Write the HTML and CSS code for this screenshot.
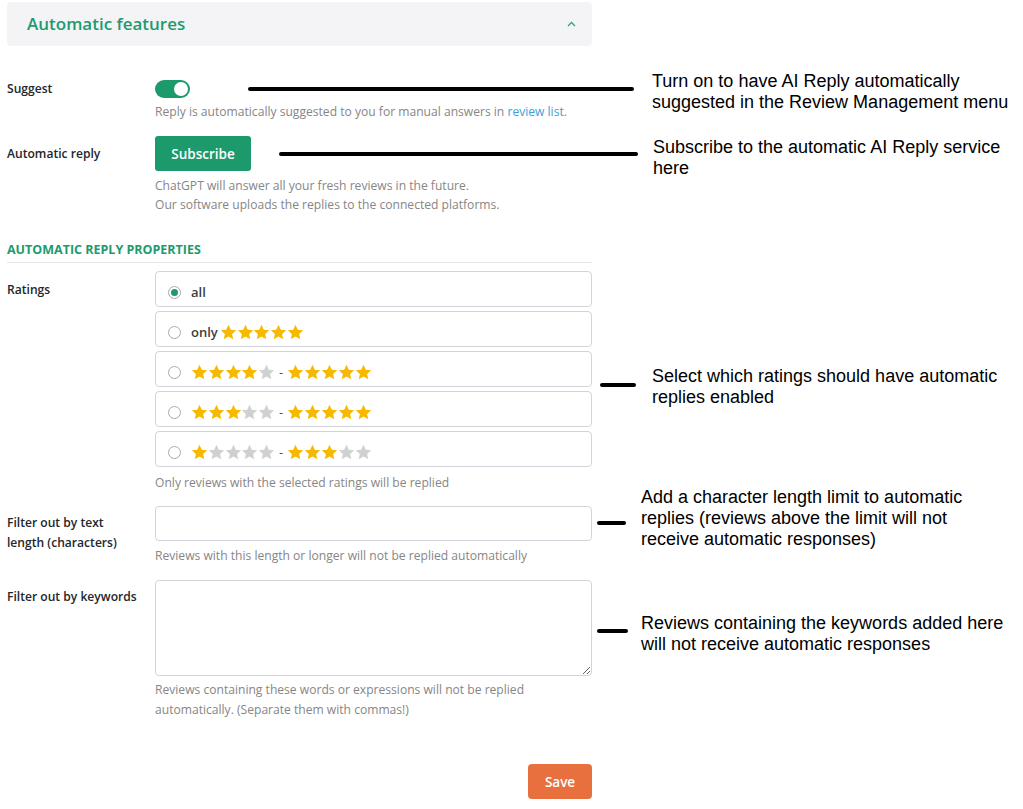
FILE: index.html
```html
<!DOCTYPE html>
<html lang="en">
<head>
<meta charset="utf-8">
<title>Automatic features</title>
<link rel="stylesheet" href="styles.css">
</head>
<body>
<svg class="defs" width="0" height="0" aria-hidden="true">
  <symbol id="star" viewBox="0 0 24 24">
    <polygon points="12,1.2 15.2,8.1 22.8,8.9 17.1,14.1 18.7,21.6 12,17.8 5.3,21.6 6.9,14.1 1.2,8.9 8.8,8.1"/>
  </symbol>
</svg>
<div class="page">
  <div class="form">
    <div class="panel-head">
      <h2 class="panel-title">Automatic features</h2>
      <svg class="chevron" width="9" height="6" viewBox="0 0 9 6"><polyline points="1,5 4.5,1.5 8,5" fill="none" stroke="#2aa58a" stroke-width="1.3"/></svg>
    </div>

    <div class="row row-suggest">
      <div class="label">Suggest</div>
      <div class="control">
        <div class="toggle"><span class="knob"></span></div>
        <p class="hint">Reply is automatically suggested to you for manual answers in <a class="link" href="#">review list</a>.</p>
      </div>
    </div>

    <div class="row row-auto">
      <div class="label label-btn">Automatic reply</div>
      <div class="control">
        <button class="btn btn-green" type="button">Subscribe</button>
        <p class="hint hint-btn">ChatGPT will answer all your fresh reviews in the future.<br>Our software uploads the replies to the connected platforms.</p>
      </div>
    </div>

    <h3 class="section-title">AUTOMATIC REPLY PROPERTIES</h3>

    <div class="row row-ratings">
      <div class="label label-box">Ratings</div>
      <div class="control">
        <div class="options">
          <label class="option"><span class="radio checked"></span><span class="opt-text">all</span></label>
          <label class="option"><span class="radio"></span><span class="opt-text">only</span>
            <span class="stars"><svg class="s on"><use href="#star"/></svg><svg class="s on"><use href="#star"/></svg><svg class="s on"><use href="#star"/></svg><svg class="s on"><use href="#star"/></svg><svg class="s on"><use href="#star"/></svg></span></label>
          <label class="option"><span class="radio"></span>
            <span class="stars"><svg class="s on"><use href="#star"/></svg><svg class="s on"><use href="#star"/></svg><svg class="s on"><use href="#star"/></svg><svg class="s on"><use href="#star"/></svg><svg class="s off"><use href="#star"/></svg></span><span class="dash">-</span>
            <span class="stars"><svg class="s on"><use href="#star"/></svg><svg class="s on"><use href="#star"/></svg><svg class="s on"><use href="#star"/></svg><svg class="s on"><use href="#star"/></svg><svg class="s on"><use href="#star"/></svg></span></label>
          <label class="option"><span class="radio"></span>
            <span class="stars"><svg class="s on"><use href="#star"/></svg><svg class="s on"><use href="#star"/></svg><svg class="s on"><use href="#star"/></svg><svg class="s off"><use href="#star"/></svg><svg class="s off"><use href="#star"/></svg></span><span class="dash">-</span>
            <span class="stars"><svg class="s on"><use href="#star"/></svg><svg class="s on"><use href="#star"/></svg><svg class="s on"><use href="#star"/></svg><svg class="s on"><use href="#star"/></svg><svg class="s on"><use href="#star"/></svg></span></label>
          <label class="option"><span class="radio"></span>
            <span class="stars"><svg class="s on"><use href="#star"/></svg><svg class="s off"><use href="#star"/></svg><svg class="s off"><use href="#star"/></svg><svg class="s off"><use href="#star"/></svg><svg class="s off"><use href="#star"/></svg></span><span class="dash">-</span>
            <span class="stars"><svg class="s on"><use href="#star"/></svg><svg class="s on"><use href="#star"/></svg><svg class="s on"><use href="#star"/></svg><svg class="s off"><use href="#star"/></svg><svg class="s off"><use href="#star"/></svg></span></label>
        </div>
        <p class="hint hint-opt">Only reviews with the selected ratings will be replied</p>
      </div>
    </div>

    <div class="row row-length">
      <div class="label label-input">Filter out by text<br>length (characters)</div>
      <div class="control">
        <input class="input" type="text">
        <p class="hint hint-input">Reviews with this length or longer will not be replied automatically</p>
      </div>
    </div>

    <div class="row row-keywords">
      <div class="label label-input">Filter out by keywords</div>
      <div class="control">
        <textarea class="textarea"></textarea>
        <p class="hint hint-area">Reviews containing these words or expressions will not be replied automatically. (Separate them with commas!)</p>
      </div>
    </div>

    <div class="actions">
      <button class="btn btn-orange" type="button">Save</button>
    </div>
  </div>

  <div class="note note-1"><span class="bar bar-1"></span><p class="note-text">Turn on to have AI Reply automatically<br>suggested in the Review Management menu</p></div>
  <div class="note note-2"><span class="bar bar-2"></span><p class="note-text">Subscribe to the automatic AI Reply service<br>here</p></div>
  <div class="note note-3"><span class="bar bar-3"></span><p class="note-text">Select which ratings should have automatic<br>replies enabled</p></div>
  <div class="note note-4"><span class="bar bar-4"></span><p class="note-text">Add a character length limit to automatic<br>replies (reviews above the limit will not<br>receive automatic responses)</p></div>
  <div class="note note-5"><span class="bar bar-5"></span><p class="note-text">Reviews containing the keywords added here<br>will not receive automatic responses</p></div>
</div>
</body>
</html>
```

FILE: styles.css
```css
* { box-sizing: border-box; }
html, body { margin: 0; padding: 0; background: #fff; }
body {
  font-family: "Open Sans", "Noto Sans", sans-serif;
  font-size: 12.1px;
  color: #23262b;
}
.defs { position: absolute; width: 0; height: 0; overflow: hidden; }

.page { position: relative; width: 1023px; height: 809px; }

.form { width: 592px; padding: 2px 0 0 7px; }

.panel-head {
  height: 44px;
  background: #f4f4f6;
  border-radius: 4px;
  display: flex;
  align-items: center;
  justify-content: space-between;
  padding: 0 16px 0 20px;
}
.panel-title {
  margin: -2px 0 0;
  font-size: 17px;
  font-weight: 600;
  color: #1f9a6f;
}
.chevron { margin-top: -1px; }

.row { display: grid; grid-template-columns: 148px 437px; }
.label { font-weight: 600; line-height: 20px; color: #23262b; }
.hint { margin: 0; color: #868686; line-height: 19.5px; }
.link { color: #3b9fd6; text-decoration: none; }

.row-suggest { margin-top: 32px; }
.toggle {
  width: 35px; height: 18px; border-radius: 9px;
  background: #1d9a6c; position: relative; margin-top: 2px;
}
.knob {
  position: absolute; right: 2px; top: 2px;
  width: 14px; height: 14px; border-radius: 50%; background: #fff;
}
.row-suggest .label { padding-top: 1px; }
.row-suggest .hint { margin-top: 4px; }

.row-auto { margin-top: 14px; }
.label-btn { padding-top: 8px; }
.btn {
  border: 0; border-radius: 3px; color: #fff;
  font-family: inherit; font-weight: 600; font-size: 13.5px;
  height: 35px; cursor: pointer; padding-top: 2px;
}
.btn-green { background: #1d9a6c; width: 96px; }
.hint-btn { margin-top: 5px; }

.section-title {
  margin: 25px 0 0;
  font-size: 12.5px; font-weight: 700; color: #1d9a6c;
  line-height: 20px; padding-bottom: 2px;
  border-bottom: 1px solid #e3e3e6;
}

.row-ratings { margin-top: 8px; }
.label-box { padding-top: 9px; }
.options { display: flex; flex-direction: column; gap: 4px; }
.option {
  height: 36px; border: 1px solid #d3d3dc; border-radius: 4px;
  display: flex; align-items: center; padding: 7px 0 0 12px;
  font-weight: 600; color: #3a3d44; font-size: 13px;
}
.radio {
  width: 13px; height: 13px; border-radius: 50%;
  border: 1px solid #a9a9a9; margin-right: 10px; flex: none;
  display: flex; align-items: center; justify-content: center;
}
.radio.checked::after {
  content: ""; width: 7px; height: 7px; border-radius: 50%; background: #1d9a6c;
}
.opt-text { margin-right: 2px; }
.stars { display: flex; }
.s { width: 17px; height: 17px; margin-right: -0.2px; }
.s.on { fill: #f6b900; }
.s.off { fill: #d0d0d0; }
.dash { margin: 0 4px 0 4px; font-weight: 400; color: #555; }
.hint-opt { margin-top: 6px; }

.row-length { margin-top: 14px; }
.label-input { padding-top: 7px; }
.input {
  display: block; width: 100%; height: 35px;
  border: 1px solid #d3d3dc; border-radius: 4px; font: inherit;
}
.hint-input { margin-top: 5px; }

.row-keywords { margin-top: 14px; }
.textarea {
  display: block; width: 100%; height: 96px;
  border: 1px solid #d3d3dc; border-radius: 4px; font: inherit;
}
.hint-area { margin-top: 4px; line-height: 20px; }

.actions { display: flex; justify-content: flex-end; margin-top: 44px; }
.btn-orange { background: #e8703f; width: 64px; border-radius: 4px; }

/* annotation callouts over the screenshot */
.note { position: absolute; display: flex; align-items: flex-start; }
.note-text {
  margin: 0;
  font-family: "Liberation Sans", Arial, sans-serif;
  font-size: 18px; line-height: 21px; color: #000;
}
.bar { display: block; height: 4px; border-radius: 2px; background: #000; flex: none; }
.note-1 { left: 248px; top: 71px; }
.bar-1 { width: 386px; margin: 16px 18px 0 0; }
.note-2 { left: 279px; top: 137px; }
.bar-2 { width: 359px; margin: 15px 15px 0 0; }
.note-3 { left: 600px; top: 366px; }
.bar-3 { width: 36px; margin: 17px 16px 0 0; }
.note-4 { left: 597px; top: 487px; }
.bar-4 { width: 29px; margin: 34px 15px 0 0; }
.note-5 { left: 597px; top: 613px; }
.bar-5 { width: 31px; margin: 16px 13px 0 0; }
```
